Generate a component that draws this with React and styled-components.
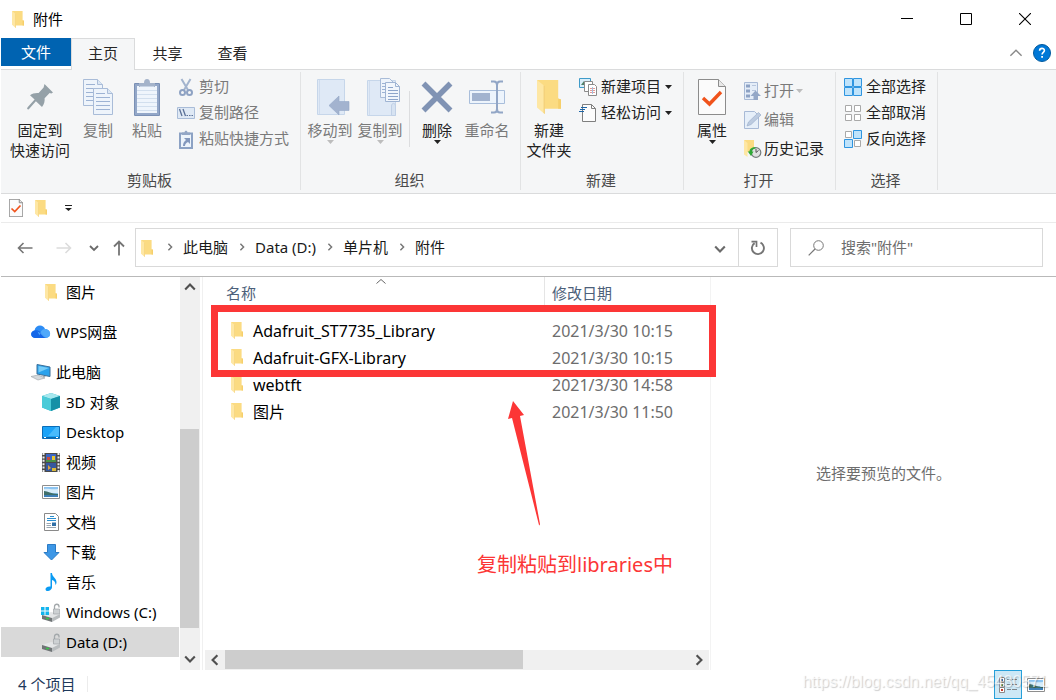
import React from "react";
import styled, { createGlobalStyle } from "styled-components";

const Global = createGlobalStyle`
  *, *::before, *::after { box-sizing: border-box; }
  body {
    margin: 0;
    background: #fff;
    color: #000;
    font: 15px/20px "Noto Sans", "Noto Sans CJK SC", sans-serif;
  }
  button, input { font: inherit; color: inherit; }
  button { border: 0; padding: 0; background: none; cursor: default; }
  svg { display: block; flex: none; }
`;

/* ---------- window frame ---------- */

const Window = styled.div`
  position: relative;
  display: flex;
  flex-direction: column;
  min-height: 100vh;
  padding-left: 1px;
`;

const TitleBar = styled.header`
  display: flex;
  align-items: center;
  height: 38px;
  padding: 0 2px 0 11px;
`;

const Title = styled.h1`
  flex: 1;
  margin: 0 0 0 9px;
  font-size: 15px;
  font-weight: 400;
`;

const CaptionButton = styled.button`
  display: flex;
  align-items: center;
  justify-content: center;
  width: 59px;
  height: 38px;
`;

const TabRow = styled.div`
  display: flex;
  height: 32px;
  border-bottom: 1px solid #dadbdc;
`;

const FileTab = styled.button`
  width: 70px;
  height: 28px;
  background: #0063b1;
  color: #fff;
`;

const Tab = styled.button`
  width: ${(p) => (p.$active ? 64 : 65)}px;
  height: 32px;
  padding-bottom: 3px;
  color: #262626;
  border: ${(p) => (p.$active ? "1px solid #dadbdc" : "0")};
  border-bottom: 0;
  background: ${(p) => (p.$active ? "#f5f6f7" : "transparent")};
`;

const TabTools = styled.div`
  display: flex;
  align-items: center;
  gap: 10px;
  height: 30px;
  margin-left: auto;
  padding-right: 5px;
`;

/* ---------- ribbon ---------- */

const Ribbon = styled.div`
  display: flex;
  height: 124px;
  padding: 2px 0 3px;
  background: #f5f6f7;
  border-bottom: 1px solid #dadbdc;
`;

const GroupBox = styled.section`
  display: flex;
  flex-direction: column;
  flex: none;
  padding: 2px 0 0;
  border-right: 1px solid #e2e3e4;
`;

const GroupBody = styled.div`
  display: flex;
  align-items: flex-start;
  padding: 0 ${(p) => p.$end}px 0 4px;
`;

const GroupLabel = styled.h2`
  margin: auto 2px 0 0;
  font-size: 15px;
  font-weight: 400;
  text-align: center;
  color: #4a4a4a;
`;

const BigButton = styled.button`
  display: flex;
  flex-direction: column;
  align-items: center;
  width: ${(p) => p.$w}px;
  white-space: nowrap;
  color: ${(p) => (p.disabled ? "#7a7a7a" : "#222")};
`;

const BigIcon = styled.span`
  display: flex;
  align-items: center;
  justify-content: center;
  height: 46px;
`;

const SmallColumn = styled.div`
  display: flex;
  flex-direction: column;
  padding-top: ${(p) => p.$top || 0}px;
  margin-left: ${(p) => p.$indent}px;
`;

const SmallButton = styled.button`
  display: flex;
  align-items: center;
  gap: ${(p) => p.$gap || 4}px;
  height: ${(p) => p.$h || 26}px;
  white-space: nowrap;
  color: ${(p) => (p.disabled ? "#7a7a7a" : "#222")};
`;

const SmallIcon = styled.span`
  display: flex;
  justify-content: center;
  width: 18px;
`;

const SmallText = styled.span`
  padding-bottom: 2px;
`;

const Rule = styled.span`
  width: 1px;
  height: 56px;
  margin: 17px 2px 0 4px;
  background: #dcdddf;
`;

const QuickBar = styled.div`
  display: flex;
  align-items: center;
  height: 29px;
  padding-left: 8px;
  border-bottom: 1px solid #ebebeb;
`;

const QuickButton = styled.button`
  display: flex;
  align-items: center;
  justify-content: center;
  width: ${(p) => p.$w}px;
  height: 24px;
`;

/* ---------- address row ---------- */

const AddressRow = styled.div`
  display: flex;
  padding: 5px 13px 9px 5px;
  border-bottom: 1px solid #b9b9b9;
`;

const NavButton = styled.button`
  display: flex;
  align-items: center;
  justify-content: center;
  width: ${(p) => p.$w}px;
  height: 39px;
`;

const AddressBox = styled.div`
  display: flex;
  flex: 1;
  height: 39px;
  margin-left: 2px;
  padding-left: 5px;
  border: 1px solid #d9d9d9;
`;

const Crumbs = styled.ol`
  display: flex;
  flex: 1;
  align-items: center;
  margin: 0 0 0 13px;
  padding: 0 0 2px;
  list-style: none;
`;

const Crumb = styled.li`
  display: flex;
  align-items: center;
  gap: 9px;
  padding-right: 10px;
  a { color: #1a1a1a; text-decoration: none; }
`;

const RefreshButton = styled(NavButton)`
  height: 37px;
  border-left: 1px solid #d9d9d9;
`;

const SearchBox = styled.label`
  display: flex;
  align-items: center;
  flex: 0 1 253px;
  min-width: 0;
  height: 39px;
  margin-left: 12px;
  padding-left: 17px;
  border: 1px solid #d9d9d9;
  input {
    flex: 1;
    min-width: 0;
    margin-left: 17px;
    padding: 0 0 2px;
    border: 0;
    outline: 0;
    background: none;
  }
  input::placeholder { color: #6d6d6d; opacity: 1; }
`;

/* ---------- main area ---------- */

const Main = styled.main`
  position: relative;
  flex: 1;
  display: grid;
  grid-template-columns: 202px minmax(0, 508fr) minmax(0, 345fr);
  min-height: 393px;
`;

const NavPane = styled.nav`
  display: flex;
  gap: 1px;
  padding-right: 2px;
  border-right: 1px solid #f0f0f0;
`;

const Tree = styled.ul`
  flex: 1;
  margin: 0;
  padding: 0;
  list-style: none;
`;

const TreeItem = styled.li`
  margin-bottom: ${(p) => (p.$spaced ? 10 : 0)}px;
  background: ${(p) => (p.$selected ? "#d9d9d9" : "transparent")};
  a {
    display: flex;
    align-items: center;
    gap: 5px;
    height: 30px;
    padding-left: ${(p) => (p.$root ? 30 : 40)}px;
    color: #000;
    text-decoration: none;
    white-space: nowrap;
  }
`;

const TreeIcon = styled.span`
  display: flex;
  justify-content: center;
  width: 20px;
`;

const ScrollTrack = styled.div`
  display: flex;
  flex-direction: ${(p) => (p.$horizontal ? "row" : "column")};
  flex: none;
  background: #f0f0f0;
  ${(p) => (p.$horizontal ? "height: 20px;" : "width: 20px; padding-bottom: 1px;")}
`;

const ScrollButton = styled.button`
  display: flex;
  align-items: center;
  justify-content: center;
  flex: none;
  width: 20px;
  height: 20px;
`;

const ScrollPart = styled.div`
  flex: ${(p) => p.$grow} 1 0;
  background: ${(p) => (p.$thumb ? "#cdcdcd" : "transparent")};
  ${(p) => p.$thumb && (p.$horizontal ? "margin-bottom: 1px;" : "margin-right: 1px;")}
`;

const FilePane = styled.section`
  position: relative;
  display: flex;
  flex-direction: column;
  padding: 0 1px 0 2px;
  border-right: 1px solid #f3f3f3;
`;

const FileTable = styled.table`
  width: calc(100% - 13px);
  margin: 0 0 auto 13px;
  table-layout: fixed;
  border-collapse: collapse;
  th, td { padding: 0; text-align: left; font-weight: 400; white-space: nowrap; }
  th { height: 40px; vertical-align: top; color: #4c607a; }
  td { height: 27px; color: #6d6d6d; font-size: 16px; }
  td:last-child { padding-left: 8px; }
`;

const NameHead = styled.div`
  padding-top: 2px;
  line-height: 18px;
  svg { margin: 0 auto; }
  span { padding-left: 8px; }
`;

const DateHead = styled.div`
  height: 32px;
  padding-left: 7px;
  line-height: 32px;
  border-left: 1px solid #e5e5e5;
`;

const FileName = styled.a`
  display: flex;
  align-items: center;
  gap: 10px;
  padding-left: 13px;
  color: #000;
  text-decoration: none;
`;

const Highlight = styled.div`
  position: absolute;
  z-index: 2;
  top: 28px;
  left: 8px;
  right: -6px;
  height: 72px;
  border: 7px solid #fc3636;
  pointer-events: none;
`;

const Arrow = styled.svg`
  position: absolute;
  z-index: 2;
  top: 123px;
  left: 304px;
`;

const Note = styled.p`
  position: absolute;
  z-index: 2;
  top: 274px;
  left: 274px;
  margin: 0;
  font-size: 20px;
  line-height: 28px;
  color: #fc3636;
  white-space: nowrap;
`;

const Preview = styled.aside`
  display: flex;
  align-items: center;
  justify-content: center;
  padding-bottom: 2px;
  color: #6d6d6d;
`;

const StatusBar = styled.footer`
  display: flex;
  height: 30px;
  padding: 0 6px 0 17px;
  color: #1e395b;
`;

const Count = styled.span`
  display: flex;
  align-items: center;
  height: 28px;
  padding-right: 12px;
`;

const StatusRule = styled.span`
  width: 1px;
  height: 16px;
  margin-top: 6px;
  background: #ececec;
`;

const ViewButton = styled.button`
  display: flex;
  align-items: center;
  justify-content: center;
  width: 28px;
  height: 29px;
  margin-left: ${(p) => (p.$active ? "auto" : "0")};
  border: ${(p) => (p.$active ? "1px solid #26a0da" : "0")};
  background: ${(p) => (p.$active ? "#cce8f6" : "transparent")};
`;

const Watermark = styled.span`
  position: absolute;
  right: 8px;
  bottom: 8px;
  font: 16px/20px "Liberation Sans", sans-serif;
  color: rgba(255, 255, 255, 0.7);
  text-shadow: 1px 1px 1px rgba(0, 0, 0, 0.2);
  pointer-events: none;
`;

/* ---------- icons ---------- */

const Svg = ({ w, h, vb, children, ...rest }) => (
  <svg width={w} height={h} viewBox={vb || `0 0 ${w} ${h}`} fill="none" aria-hidden="true" {...rest}>
    {children}
  </svg>
);

const Folder = ({ w = 12, h = 17 }) => (
  <Svg w={w} h={h} vb="0 0 12 17">
    <path d="M0 0H10.6V9.2L12 9.8V14.4H3Z" fill="#fbdb82" />
    <path d="M10.6 9.2L12 9.8V14.4H10.6Z" fill="#f6cf6b" />
    <path d="M0 0L3.8 3V17L0 13.8Z" fill="#fee7a4" />
    <path d="M3.3 2.6L3.9 3V17L3.3 16.5Z" fill="#f3cf75" />
  </Svg>
);

const Caret = ({ color = "#222" }) => (
  <Svg w={7} h={4}>
    <path d="M0 0H7L3.5 4Z" fill={color} />
  </Svg>
);

const Chevron = ({ dir = "down", color = "#6a6a6a", w = 10, sw = 1.8 }) => {
  const d = {
    down: "M1 3L5 7L9 3",
    up: "M1 7L5 3L9 7",
    right: "M3 1L7 5L3 9",
    left: "M7 1L3 5L7 9",
  }[dir];
  return (
    <Svg w={w} h={w} vb="0 0 10 10">
      <path d={d} stroke={color} strokeWidth={sw} />
    </Svg>
  );
};

const Minimize = () => <Svg w={12} h={12}><path d="M0 5.5H12" stroke="#000" /></Svg>;
const Maximize = () => <Svg w={12} h={12}><path d="M.5 .5H11.5V11.5H.5Z" stroke="#000" /></Svg>;
const Close = () => <Svg w={12} h={12}><path d="M0 0L12 12M12 0L0 12" stroke="#000" strokeWidth="1.1" /></Svg>;

const Help = () => (
  <Svg w={18} h={18}>
    <circle cx="9" cy="9" r="8.5" fill="#0078d7" stroke="#005a9e" />
    <path d="M6.6 6.7C6.6 3.6 11.4 3.6 11.4 6.6C11.4 8.4 9.1 8.4 9.1 10.4" stroke="#fff" strokeWidth="1.6" />
    <path d="M8.2 12H10V13.8H8.2Z" fill="#fff" />
  </Svg>
);

const Pin = () => (
  <Svg w={26} h={26}>
    <path d="M17.5 0L26 8.6L24.3 9.4L22.6 9.1L17.6 14.3C17.9 17 17.4 20.2 15 23L8.9 17.2L1.6 25.5L0 25L.6 23.2L7.6 15.6L3 11.2C5.2 9.4 8.4 8.7 11.6 9L16.6 3.6Z" fill="#95a1a8" />
  </Svg>
);

const Sheet = ({ x, y }) => (
  <g transform={`translate(${x} ${y})`}>
    <path d="M.5 .5H14.5L19.5 5.5V26.5H.5Z" fill="#eef4fb" stroke="#a9bcd8" />
    <path d="M14.5 .5V5.5H19.5" fill="#dce7f4" stroke="#a9bcd8" />
    <path d="M3 5.5H12M3 9.5H17M3 13.5H17M3 17.5H17M3 21.5H17" stroke="#9db3d4" />
  </g>
);

const CopyIcon = () => (
  <Svg w={30} h={36}>
    <Sheet x={0} y={0} />
    <Sheet x={10} y={9} />
  </Svg>
);

const PasteIcon = () => (
  <Svg w={26} h={37}>
    <rect y="4" width="26" height="33" rx="1" fill="#7a90b5" />
    <rect x="1" y="5" width="24" height="31" fill="#93a7c8" />
    <path d="M3 7H23V34H3Z" fill="#eff5fc" />
    <path d="M3 11.5H23M3 15.5H23M3 19.5H23M3 23.5H23M3 27.5H23M3 31.5H23" stroke="#d2dfee" />
    <path d="M5 8V4H10C10 1.200 11 0 13 0S16 1.200 16 4H21V8Z" fill="#a4b3ca" />
    <path d="M6 7.500H20" stroke="#c7d3e4" />
  </Svg>
);

const CutIcon = () => (
  <Svg w={14} h={19}>
    <path d="M2.500 1L9 12M11.500 1L5 12" stroke="#a3b4ce" strokeWidth="2" />
    <circle cx="3.500" cy="14.500" r="2.500" stroke="#8ea2c3" strokeWidth="2" />
    <circle cx="10.500" cy="14.500" r="2.500" stroke="#8ea2c3" strokeWidth="2" />
  </Svg>
);

const PathIcon = () => (
  <Svg w={18} h={12}>
    <path d="M.5 .5H17.500V11.500H.5Z" fill="#dfe9f5" stroke="#a9bcd8" />
    <path d="M2.500 2L5 9M6 2L8.500 9" stroke="#5b7198" strokeWidth="1.300" />
    <path d="M9.500 8.500H11M12 8.500H13.500M14.500 8.500H16" stroke="#5b7198" />
  </Svg>
);

const ShortcutIcon = () => (
  <Svg w={14} h={19}>
    <path d="M1 3.500H13V18H1Z" fill="#edf4fb" stroke="#8ca2c4" strokeWidth="2" />
    <path d="M3 5V2.500H5.500C5.500 0 8.500 0 8.500 2.500H11V5Z" fill="#93a7c6" />
    <path d="M5 8H11V14L9 12C7 13 6 14 6 16H4C4 13 5 11.500 7 10Z" fill="#8398bd" />
  </Svg>
);

const Folio = ({ w = 28 }) => (
  <>
    <path d={`M.5 .5H${w - 0.5}V35.500H.5Z`} fill="#dfe9f6" stroke="#c6d6ea" />
    <path d="M2.500 1V35" stroke="#cfdcee" />
  </>
);

const MoveToIcon = () => (
  <Svg w={39} h={38} vb="-6 0 39 38">
    <g transform="translate(0 1)"><Folio /></g>
    <path d="M12 27.500L22 18V23.500H32V32.500H22V37Z" fill="#a3b3cf" stroke="#94a8c8" strokeWidth=".6" />
  </Svg>
);

const CopyToIcon = () => (
  <Svg w={39} h={38} vb="-6 0 39 38">
    <g transform="translate(0 2)"><Folio w={29} /></g>
    <path d="M24.500 37.500V28C24.500 24.500 28.500 24.500 28.500 28V37.500Z" fill="#d7e3f2" stroke="#c0d0e6" />
    <path d="M13.500 .5H22.500L26.500 4.500V19.500H13.500Z" fill="#eef4fb" stroke="#a9bcd8" />
    <path d="M15 5.500H19M15 8.500H19M15 11.500H19M15 14.500H19" stroke="#9db3d4" />
    <path d="M18.500 4.500H28.500L32.500 8.500V23.500H18.500Z" fill="#f1f6fc" stroke="#9fb4d3" />
    <path d="M28.500 4.500V8.500H32.500" stroke="#9fb4d3" />
    <path d="M21 9.500H26M21 12.500H31M21 15.500H31M21 18.500H31M21 21.500H31" stroke="#8da5ca" />
  </Svg>
);

const DeleteIcon = () => (
  <Svg w={32} h={32}>
    <path d="M2.500 2.500L29.500 29.500M29.500 2.500L2.500 29.500" stroke="#8093b4" strokeWidth="5.500" />
  </Svg>
);

const RenameIcon = () => (
  <Svg w={36} h={34}>
    <path d="M.5 10.500H35.500V23.500H.5Z" fill="#edf4fc" stroke="#a9bedb" />
    <path d="M3 13H21V21H3Z" fill="#a2b3cf" />
    <path d="M22 1.500H25C27 1.500 28 3 28 5V29C28 31 27 32.500 25 32.500H22M34 1.500H31C29 1.500 28 3 28 5M34 32.500H31C29 32.500 28 31 28 29" stroke="#92a6c6" strokeWidth="2" />
  </Svg>
);

const NewItemIcon = () => (
  <Svg w={18} h={18}>
    <path d="M.5 .5H11.500V9.500H.5Z" fill="#d9eefa" stroke="#3f9bc9" />
    <path d="M2 7L5 3L8 7Z" fill="#4f7f66" />
    <path d="M5.500 3.500H13.500V13.500H5.500Z" fill="#fff" stroke="#8b8b8b" />
    <path d="M9.500 6.500H15.500L17.500 8.500V17.500H9.500Z" fill="#fff" stroke="#8b8b8b" />
    <path d="M11 10.500H16M11 12.500H16M11 14.500H16" stroke="#e39a98" />
    <path d="M13.500 9V16" stroke="#9fc1e0" />
  </Svg>
);

const EasyAccessIcon = () => (
  <Svg w={18} h={18}>
    <path d="M3.500 .5H12.500L16.500 4.500V17.500H3.500Z" fill="#fcfcfc" stroke="#7f7f7f" />
    <path d="M12.500 .5V4.500H16.500" stroke="#7f7f7f" />
    <path d="M2 3.500H8M1 5.500H6M0 7.500H5" stroke="#1d66a8" />
  </Svg>
);

const PropertiesIcon = ({ w = 28, h = 36, sw = 1 }) => (
  <Svg w={w} h={h} vb="0 0 28 36">
    <path d="M.5 .5H20.500L27.500 7.500V35.500H.5Z" fill="#fbfbfb" stroke="#8c8c8c" strokeWidth={sw} />
    <path d="M20.500 .5V7.500H27.500" fill="#e8e8e8" stroke="#8c8c8c" strokeWidth={sw} />
    <path d="M5 19L11.500 25L23 13" stroke="#f0531c" strokeWidth="3.400" />
  </Svg>
);

const OpenIcon = () => (
  <Svg w={18} h={18}>
    <path d="M.5 .5H13.500V17.500H.5Z" fill="#e4edf8" stroke="#a8bad6" />
    <path d="M2 2.500H6V5.500H2ZM2 7.500H6V10.500H2ZM2 12.500H6V15.500H2Z" fill="#8da2c4" />
    <path d="M8 3.500H12M8 8.500H12" stroke="#b7c6dd" />
    <path d="M11.500 8.500L17 14H14V18H9.500V14H6.500Z" fill="#93a7c7" />
  </Svg>
);

const EditIcon = () => (
  <Svg w={18} h={18}>
    <path d="M.5 .5H10.500L14.500 4.500V17.500H.5Z" fill="#e6eff9" stroke="#a8bad6" />
    <path d="M3 15L4.500 11L14.500 1.500L17 4L7 13.500Z" fill="#bccbe0" stroke="#9db0cd" strokeWidth=".7" />
  </Svg>
);

const HistoryIcon = () => (
  <Svg w={18} h={18}>
    <path d="M0 0H10V12H3Z" fill="#fbdb82" />
    <path d="M0 0L3.500 3V17L0 14.500Z" fill="#fee7a4" />
    <circle cx="12" cy="12.500" r="4.800" fill="#dfe1e1" stroke="#757c7c" strokeWidth="1.200" />
    <path d="M12 9V12.500L14.500 10.500" stroke="#555" />
    <path d="M11.500 7.300C8 7 5.500 9 5.500 11.500H3.800L7 16L9.500 11.500H8C8 9.800 9.500 8.600 11.500 8.600Z" fill="#2fa836" />
  </Svg>
);

/* Each cell of the 2x2 grid is drawn filled when it is part of the selection. */
const CellsIcon = ({ on }) => (
  <Svg w={18} h={18}>
    {[[0, 0], [9, 0], [0, 9], [9, 9]].map(([x, y], i) =>
      on[i] ? (
        <path key={i} d={`M${x + 0.5} ${y + 0.5}h8v8h-8Z`} fill="#bfe3fb" stroke="#2f95e0" />
      ) : (
        <path key={i} d={`M${x + 1.5} ${y + 1.5}h6v6h-6Z`} fill="#fff" stroke="#a9a9a9" />
      )
    )}
  </Svg>
);

const QuickMenuIcon = () => (
  <Svg w={7} h={6}><path d="M0 .5H7" stroke="#222" /><path d="M0 3H7L3.500 6Z" fill="#222" /></Svg>
);

const ArrowLeft = () => <Svg w={16} h={12}><path d="M15.500 6H1.500M6.500 1L1.500 6L6.500 11" stroke="#757575" strokeWidth="1.600" /></Svg>;
const ArrowRight = () => <Svg w={16} h={12}><path d="M.5 6H14.500M9.500 1L14.500 6L9.500 11" stroke="#dcdcdc" strokeWidth="1.600" /></Svg>;
const ArrowUp = () => <Svg w={12} h={16}><path d="M6 15.500V1.500M1 6.500L6 1.500L11 6.500" stroke="#757575" strokeWidth="1.800" /></Svg>;

const Refresh = () => (
  <Svg w={16} h={16}>
    <path d="M10.500 2.700A6 6 0 1 1 4.600 3.100" stroke="#757575" strokeWidth="1.900" />
    <path d="M1.500 1.700H6.500V7" stroke="#757575" strokeWidth="1.700" />
  </Svg>
);

const SearchIcon = () => (
  <Svg w={16} h={16}>
    <circle cx="10.500" cy="5.500" r="4.800" stroke="#777" />
    <path d="M7 9L.7 15.300" stroke="#777" strokeWidth="1.200" />
  </Svg>
);

const CloudIcon = () => (
  <Svg w={20} h={14}>
    <path d="M4 13C-1 12.500-1 6.500 3.500 5.500C4.500-1 12.500-1 14 4C20 4 21 12 15.500 13Z" fill="#2d8cf5" />
    <path d="M4 13C-1 12.500-1 6.500 3.500 5.500C7 4.500 9.500 6 15.500 13Z" fill="#1466e8" />
    <path d="M8.500 10.500C9.500 6 11.500 4 14 4C20 4 21 12 15.500 13C12.500 13 10.500 8.500 6.500 6.500" fill="#59b0fb" opacity=".8" />
  </Svg>
);

const PcIcon = () => (
  <Svg w={20} h={17}>
    <path d="M6 .5L19 3V12.500L6 10Z" fill="#2aa2ec" stroke="#3b6f99" />
    <path d="M7.500 2L18 4L7.500 8.500Z" fill="#76ccf8" />
    <path d="M0 12.500L7 11L14 14L7 16Z" fill="#d5d9dc" stroke="#9aa1a6" strokeWidth=".6" />
    <path d="M10 11L15 12.500L13 13.500Z" fill="#a2a9ae" />
  </Svg>
);

const CubeIcon = () => (
  <Svg w={18} h={18}>
    <path d="M9 0L18 3V14.500L9 18L0 14.500V3Z" fill="#2fb3c6" />
    <path d="M9 0L18 3L9 6L0 3Z" fill="#a7e8ee" />
    <path d="M9 6L18 3V14.500L9 18Z" fill="#1590a6" />
    <path d="M0 3L9 6V18L0 14.500Z" fill="#4acbd8" />
  </Svg>
);

const DesktopIcon = () => (
  <Svg w={18} h={13}>
    <path d="M.5 .5H17.500V12.500H.5Z" fill="#1aa3f8" stroke="#0a6db8" />
    <path d="M6 10L14 1H17V10Z" fill="#48bafc" />
    <path d="M1 11.500H17" stroke="#0b69ae" />
    <path d="M2 11.500H4M14 11.500H16" stroke="#fff" />
  </Svg>
);

const VideoIcon = () => (
  <Svg w={18} h={19}>
    <path d="M0 0H18V19H0Z" fill="#4a4a4a" />
    <path d="M1.500 0V19M16.500 0V19" stroke="#efefef" strokeWidth="2" strokeDasharray="2 1.400" />
    <path d="M4 1H14V9H4Z" fill="#3c66c4" />
    <path d="M4 10H14V18H4Z" fill="#35589f" />
    <path d="M5 4H8V7H5Z" fill="#c94a3f" />
    <path d="M10 3H13V7H10Z" fill="#e9c62f" />
    <path d="M4 7H14V9H4Z" fill="#499246" />
    <path d="M6 12L9 15L6 17Z" fill="#dfa23f" />
    <path d="M10 15H14V18H10Z" fill="#d9b93a" />
  </Svg>
);

const PictureIcon = () => (
  <Svg w={18} h={14}>
    <path d="M.5 .5H17.500V13.500H.5Z" fill="#fff" stroke="#8e8e8e" />
    <path d="M2 2H16V12H2Z" fill="#8cc4f1" />
    <path d="M2 4C6 3 9 5 16 4V8H2Z" fill="#d6ecfa" />
    <path d="M2 6C6 6 9 9 16 9V10H2Z" fill="#3f6f6a" />
    <path d="M2 10H16V12H2Z" fill="#3d7fb8" />
  </Svg>
);

const DocIcon = () => (
  <Svg w={15} h={18}>
    <path d="M.5 .5H11.500L14.500 3.500V17.500H.5Z" fill="#fff" stroke="#8a8a8a" />
    <path d="M6 3.500H10M3 5.500H12M3 7.500H12" stroke="#2a8fd0" />
    <path d="M2.500 10.500H7M2.500 12.500H7M2.500 14.500H12" stroke="#9aa7b2" />
    <path d="M8 9.500H12V13H8Z" fill="#2f6fa6" />
  </Svg>
);

const DownloadIcon = () => (
  <Svg w={17} h={17}>
    <path d="M4.500 .5H12.500V8.500H16L8.500 16L1 8.500H4.500Z" fill="#3d97e6" stroke="#2b7bc5" />
  </Svg>
);

const MusicIcon = () => (
  <Svg w={12} h={18}>
    <path d="M5.500 0H7C7 4 11.500 5 11.500 9C11.500 10.500 11 11.500 10.500 12C10.500 9 9 7.500 7 7V14C7 16.500 4.500 18 2.500 18C-.5 18-.5 13 5.500 13.500Z" fill="#0a9bf3" />
  </Svg>
);

const DriveIcon = ({ windows }) => (
  <Svg w={20} h={19}>
    <path d="M1 12L10 9L19 11L11 15Z" fill="#e4e6e7" />
    <path d="M1 12L11 15V19L1 16Z" fill="#6f7476" />
    <path d="M11 15L19 11V14.500L11 19Z" fill="#b9bdbf" />
    <path d="M5 15.500H8" stroke="#35c945" strokeWidth="1.500" />
    <path d="M13.500 6V3.500C13.500 .5 18 .5 18 3.500V4.500" stroke="#a3a8ab" strokeWidth="1.300" />
    <path d="M12.500 6H18.500V11H12.500Z" fill="#cdd1d3" stroke="#959a9d" strokeWidth=".6" />
    {windows && <path d="M0 4H3.500V7.500H0ZM4.500 4H8V7.500H4.500ZM0 8.500H3.500V12H0ZM4.500 8.500H8V12H4.500Z" fill="#12b4ee" />}
  </Svg>
);

const DetailsIcon = () => (
  <Svg w={18} h={16}>
    <path d="M.5 .5H5.500V5H.5ZM.5 5.500H5.500V10H.5ZM.5 10.500H5.500V15.500H.5Z" fill="#fff" stroke="#8a8a8a" />
    <path d="M2 2H4V4H2Z" fill="#3a7ab5" />
    <path d="M2 7H4V9H2Z" fill="#4e8b59" />
    <path d="M2 12H4V14H2Z" fill="#c63b2b" />
    <path d="M8 2.500H12M13 2.500H18M8 7.500H12M13 7.500H18M8 12.500H12M13 12.500H18" stroke="#7c8489" />
  </Svg>
);

/* ---------- parts ---------- */

const Group = ({ label, end = 11, children }) => (
  <GroupBox aria-label={label}>
    <GroupBody $end={end}>{children}</GroupBody>
    <GroupLabel>{label}</GroupLabel>
  </GroupBox>
);

const Big = ({ icon, lines, w = 50, disabled, menu }) => (
  <BigButton $w={w} disabled={disabled}>
    <BigIcon>{icon}</BigIcon>
    {lines.map((l) => <span key={l}>{l}</span>)}
    {menu && <Caret color={disabled ? "#bdbdbd" : "#222"} />}
  </BigButton>
);

const Small = ({ icon, label, disabled, menu, gap, h }) => (
  <SmallButton disabled={disabled} $gap={gap} $h={h}>
    <SmallIcon>{icon}</SmallIcon>
    <SmallText>{label}</SmallText>
    {menu && <Caret color={disabled ? "#bdbdbd" : "#222"} />}
  </SmallButton>
);

const tree = [
  { label: "图片", icon: <Folder />, spaced: true },
  { label: "WPS网盘", icon: <CloudIcon />, root: true, spaced: true },
  { label: "此电脑", icon: <PcIcon />, root: true },
  { label: "3D 对象", icon: <CubeIcon /> },
  { label: "Desktop", icon: <DesktopIcon /> },
  { label: "视频", icon: <VideoIcon /> },
  { label: "图片", icon: <PictureIcon /> },
  { label: "文档", icon: <DocIcon /> },
  { label: "下载", icon: <DownloadIcon /> },
  { label: "音乐", icon: <MusicIcon /> },
  { label: "Windows (C:)", icon: <DriveIcon windows /> },
  { label: "Data (D:)", icon: <DriveIcon />, selected: true },
];

const files = [
  ["Adafruit_ST7735_Library", "2021/3/30 10:15"],
  ["Adafruit-GFX-Library", "2021/3/30 10:15"],
  ["webtft", "2021/3/30 14:58"],
  ["图片", "2021/3/30 11:50"],
];

const crumbs = ["此电脑", "Data (D:)", "单片机", "附件"];

export default function App() {
  return (
    <Window lang="zh-CN">
      <Global />
      <TitleBar>
        <Folder />
        <Title>附件</Title>
        <CaptionButton aria-label="最小化"><Minimize /></CaptionButton>
        <CaptionButton aria-label="最大化"><Maximize /></CaptionButton>
        <CaptionButton aria-label="关闭"><Close /></CaptionButton>
      </TitleBar>

      <TabRow>
        <FileTab>文件</FileTab>
        <Tab $active>主页</Tab>
        <Tab>共享</Tab>
        <Tab>查看</Tab>
        <TabTools>
          <button aria-label="折叠功能区"><Chevron dir="up" w={14} sw={1} color="#8a8a8a" /></button>
          <button aria-label="帮助"><Help /></button>
        </TabTools>
      </TabRow>

      <Ribbon>
        <Group label="剪贴板">
          <Big w={70} icon={<Pin />} lines={["固定到", "快速访问"]} />
          <Big w={46} icon={<CopyIcon />} lines={["复制"]} disabled />
          <Big w={52} icon={<PasteIcon />} lines={["粘贴"]} disabled />
          <SmallColumn $indent={4}>
            <Small icon={<CutIcon />} label="剪切" disabled />
            <Small icon={<PathIcon />} label="复制路径" disabled />
            <Small icon={<ShortcutIcon />} label="粘贴快捷方式" disabled />
          </SmallColumn>
        </Group>
        <Group label="组织" end={8}>
          <Big icon={<MoveToIcon />} lines={["移动到"]} disabled menu />
          <Big icon={<CopyToIcon />} lines={["复制到"]} disabled menu />
          <Rule />
          <Big icon={<DeleteIcon />} lines={["删除"]} menu />
          <Big icon={<RenameIcon />} lines={["重命名"]} disabled />
        </Group>
        <Group label="新建">
          <Big w={48} icon={<Folder w={24} h={34} />} lines={["新建", "文件夹"]} />
          <SmallColumn $indent={6}>
            <Small icon={<NewItemIcon />} label="新建项目" menu />
            <Small icon={<EasyAccessIcon />} label="轻松访问" menu />
          </SmallColumn>
        </Group>
        <Group label="打开">
          <Big w={48} icon={<PropertiesIcon />} lines={["属性"]} menu />
          <SmallColumn $indent={8} $top={2}>
            <Small icon={<OpenIcon />} label="打开" disabled menu gap={2} h={29} />
            <Small icon={<EditIcon />} label="编辑" disabled gap={2} h={29} />
            <Small icon={<HistoryIcon />} label="历史记录" gap={2} h={29} />
          </SmallColumn>
        </Group>
        <Group label="选择">
          <SmallColumn $indent={4}>
            <Small icon={<CellsIcon on={[1, 1, 1, 1]} />} label="全部选择" />
            <Small icon={<CellsIcon on={[0, 0, 0, 0]} />} label="全部取消" />
            <Small icon={<CellsIcon on={[0, 1, 1, 0]} />} label="反向选择" />
          </SmallColumn>
        </Group>
      </Ribbon>

      <QuickBar>
        <QuickButton $w={14} aria-label="属性"><PropertiesIcon w={14} h={18} sw={2} /></QuickButton>
        <QuickButton $w={36} aria-label="新建文件夹"><Folder /></QuickButton>
        <QuickButton $w={18} aria-label="自定义快速访问工具栏"><QuickMenuIcon /></QuickButton>
      </QuickBar>

      <AddressRow>
        <NavButton $w={38} aria-label="后退"><ArrowLeft /></NavButton>
        <NavButton $w={40} aria-label="前进"><ArrowRight /></NavButton>
        <NavButton $w={20} aria-label="最近的位置"><Chevron /></NavButton>
        <NavButton $w={29} aria-label="上移"><ArrowUp /></NavButton>
        <AddressBox>
          <NavButton $w={12} as="span"><Folder /></NavButton>
          <Crumbs>
            {crumbs.map((c) => (
              <Crumb key={c}>
                <Chevron dir="right" w={8} color="#757575" />
                <a href="#">{c}</a>
              </Crumb>
            ))}
          </Crumbs>
          <NavButton $w={37} aria-label="以前的位置"><Chevron w={12} /></NavButton>
          <RefreshButton $w={39} aria-label="刷新"><Refresh /></RefreshButton>
        </AddressBox>
        <SearchBox>
          <SearchIcon />
          <input type="text" aria-label="搜索" placeholder={'搜索"附件"'} />
        </SearchBox>
      </AddressRow>

      <Main>
        <NavPane>
          <Tree>
            {tree.map((t, i) => (
              <TreeItem key={i} $root={t.root} $spaced={t.spaced} $selected={t.selected}>
                <a href="#"><TreeIcon>{t.icon}</TreeIcon>{t.label}</a>
              </TreeItem>
            ))}
          </Tree>
          <ScrollTrack>
            <ScrollButton aria-label="向上滚动"><Chevron dir="up" w={12} color="#505050" /></ScrollButton>
            <ScrollPart $grow={132} />
            <ScrollPart $grow={199} $thumb />
            <ScrollPart $grow={21} />
            <ScrollButton aria-label="向下滚动"><Chevron w={12} color="#505050" /></ScrollButton>
          </ScrollTrack>
        </NavPane>

        <FilePane>
          <FileTable>
            <colgroup><col style={{ width: 326 }} /><col /></colgroup>
            <thead>
              <tr>
                <th>
                  <NameHead>
                    <Svg w={10} h={5}><path d="M.5 4.500L5 .5L9.500 4.500" stroke="#666" /></Svg>
                    <span>名称</span>
                  </NameHead>
                </th>
                <th><DateHead>修改日期</DateHead></th>
              </tr>
            </thead>
            <tbody>
              {files.map(([name, date]) => (
                <tr key={name}>
                  <td><FileName href="#"><Folder />{name}</FileName></td>
                  <td>{date}</td>
                </tr>
              ))}
            </tbody>
          </FileTable>
          <ScrollTrack $horizontal>
            <ScrollButton aria-label="向左滚动"><Chevron dir="left" w={12} color="#505050" /></ScrollButton>
            <ScrollPart $grow={297} $thumb $horizontal />
            <ScrollPart $grow={166} />
            <ScrollButton aria-label="向右滚动"><Chevron dir="right" w={12} color="#505050" /></ScrollButton>
          </ScrollTrack>
          <Highlight />
          <Arrow width="34" height="126" viewBox="0 0 34 126" aria-hidden="true">
            <path d="M6 1L17 15L13 16L33 124L32.500 125.500L32 125L5 18L1 19Z" fill="#fc3636" />
          </Arrow>
          <Note>复制粘贴到libraries中</Note>
        </FilePane>

        <Preview>选择要预览的文件。</Preview>
      </Main>

      <StatusBar>
        <Count>4 个项目</Count>
        <StatusRule />
        <ViewButton $active aria-label="详细信息"><DetailsIcon /></ViewButton>
        <ViewButton aria-label="大缩略图"><PictureIcon /></ViewButton>
      </StatusBar>
      <Watermark>https://blog.csdn.net/qq_45430571</Watermark>
    </Window>
  );
}
